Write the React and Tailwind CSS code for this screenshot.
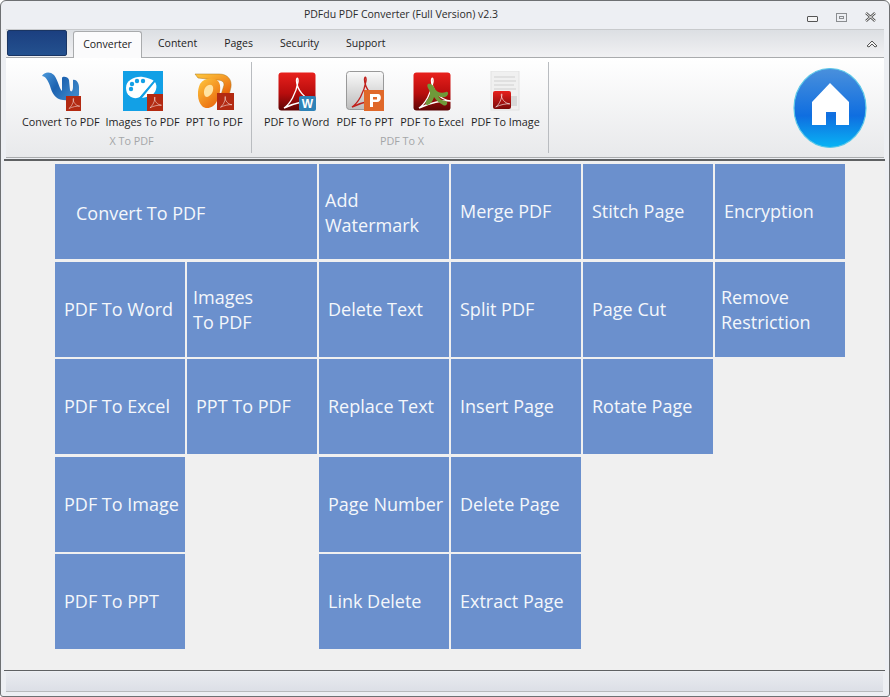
import React from 'react';

const fontStack = 'font-["Open_Sans","Liberation_Sans",sans-serif]';

const tiles = [
  { label: 'Convert To PDF', span: 'col-span-2', pad: 'pl-[21px] pt-[4px]' },
  { label: ['Add', 'Watermark'], pad: 'pl-[6px] pt-[2px]' },
  { label: 'Merge PDF' },
  { label: 'Stitch Page' },
  { label: 'Encryption' },
  { label: 'PDF To Word' },
  { label: ['Images', 'To PDF'], pad: 'pl-[6px] pt-[2px]' },
  { label: 'Delete Text' },
  { label: 'Split PDF' },
  { label: 'Page Cut' },
  { label: ['Remove', 'Restriction'], pad: 'pl-[6px] pt-[2px]' },
  { label: 'PDF To Excel' },
  { label: 'PPT To PDF' },
  { label: 'Replace Text' },
  { label: 'Insert Page' },
  { label: 'Rotate Page' },
  { blank: true },
  { label: 'PDF To Image' },
  { blank: true },
  { label: 'Page Number' },
  { label: 'Delete Page' },
  { blank: true },
  { blank: true },
  { label: 'PDF To PPT' },
  { blank: true },
  { label: 'Link Delete' },
  { label: 'Extract Page' },
];

const AcrobatMark = ({ color = '#fff', x = 0, y = 0, s = 1 }) => (
  <g transform={`translate(${x} ${y}) scale(${s})`}>
    <path
      d="M4 34 C10 30 16 20 18 8 C18.500 3 16.500 3 16.500 7 C17 15 24 26 36 27 C28 26 14 29 4 34 Z"
      fill="none"
      stroke={color}
      strokeWidth="1.400"
    />
  </g>
);

const RedSquare = ({ id }) => (
  <>
    <defs>
      <linearGradient id={id} x1="0" y1="0" x2="0" y2="1">
        <stop offset="0" stopColor="#e8201c" />
        <stop offset="0.55" stopColor="#b80d0d" />
        <stop offset="1" stopColor="#5c0505" />
      </linearGradient>
    </defs>
    <rect x="0.500" y="0.500" width="37" height="38" rx="3" fill={`url(#${id})`} />
  </>
);

const IconWps = () => (
  <svg width="40" height="40" viewBox="0 0 40 40">
    <defs>
      <linearGradient id="wpsg" x1="0" y1="0" x2="1" y2="0.600">
        <stop offset="0" stopColor="#4d9bdc" />
        <stop offset="0.500" stopColor="#1c62b0" />
        <stop offset="1" stopColor="#3c86c8" />
      </linearGradient>
    </defs>
    <path
      d="M1 5 C3 1 9 0 13 4 C17 9 18 17 21 20 L21 7 C21 5 27 5 28 9 L29 19 C30 22 32 20 32 16 L32 9 C35 8 38 12 38 16 L38 24 C36 30 28 30 22 29 C14 28 11 22 9 15 C7 9 4 5 1 5 Z"
      fill="url(#wpsg)"
    />
    <rect x="25" y="25" width="15" height="15" fill="#b32a12" />
    <AcrobatMark x={26.500} y={26} s={0.340} />
  </svg>
);

const IconImages = () => (
  <svg width="40" height="40" viewBox="0 0 40 40">
    <rect width="40" height="40" fill="#12a0e6" />
    <path d="M3 17 C3 9 12 5 20 6 C25 7 29 8 31 10 L17 26 C12 29 3 26 3 17 Z" fill="#fff" />
    <path d="M32 11 C35 15 33 22 28 25 L19 27 Z" fill="#fff" />
    <path d="M33 8 L17 27" stroke="#12a0e6" strokeWidth="1.500" />
    <circle cx="8" cy="18" r="2.200" fill="#12a0e6" />
    <circle cx="9" cy="13" r="2.200" fill="#12a0e6" />
    <circle cx="14" cy="10" r="2.200" fill="#12a0e6" />
    <circle cx="20" cy="10" r="2.200" fill="#12a0e6" />
    <rect x="24" y="23" width="16" height="17" fill="#b32a12" />
    <AcrobatMark x={25.500} y={24.500} s={0.360} />
  </svg>
);

const IconPpt = () => (
  <svg width="40" height="40" viewBox="0 0 40 40">
    <defs>
      <linearGradient id="pptg" x1="0" y1="0" x2="0.700" y2="1">
        <stop offset="0" stopColor="#ffc93f" />
        <stop offset="1" stopColor="#ea6a0e" />
      </linearGradient>
    </defs>
    <path d="M1 3 L25 3 C34 3 38 9 37 16 L35 24 L27 24 L30 14 C30 10 27 9 22 9 L4 7 Z" fill="url(#pptg)" stroke="#a8761e" strokeWidth="0.500" />
    <path d="M6 13 C10 7 19 6 24 10 C28 14 26 24 23 30 C20 37 12 39 8 35 C3 30 3 19 6 13 Z" fill="url(#pptg)" />
    <path d="M11 17 C14 13 18 13 19 16 C20 20 17 25 13 26 C10 26 9 21 11 17 Z" fill="#ffe3a3" />
    <rect x="23" y="22" width="17" height="17" fill="#b32a12" />
    <AcrobatMark x={25} y={24} s={0.360} />
  </svg>
);

const IconToWord = () => (
  <svg width="38" height="39" viewBox="0 0 38 39">
    <RedSquare id="rw" />
    <AcrobatMark x={2} y={2} />
    <rect x="21" y="24" width="17" height="15" rx="2" fill="#2e83b8" />
    <text x="29.500" y="36" textAnchor="middle" fontSize="12" fontWeight="700" fill="#fff" fontFamily="Liberation Sans">W</text>
  </svg>
);

const IconToPpt = () => (
  <svg width="38" height="40" viewBox="0 0 38 40">
    <defs>
      <linearGradient id="gp" x1="0" y1="0" x2="0" y2="1">
        <stop offset="0" stopColor="#fafafa" />
        <stop offset="1" stopColor="#bdbdbd" />
      </linearGradient>
    </defs>
    <rect x="0.500" y="0.500" width="37" height="38" rx="3" fill="url(#gp)" stroke="#999" />
    <AcrobatMark color="#c0201c" x={2} y={2} />
    <rect x="18" y="19" width="21" height="21" fill="#e0682a" />
    <path d="M24 23 L32 23 C36 23 36 31 31 31 L27 31 L27 36 L24 36 Z" fill="#fff" />
    <rect x="27" y="26" width="4" height="2.500" fill="#e0682a" />
  </svg>
);

const IconToExcel = () => (
  <svg width="38" height="39" viewBox="0 0 38 39">
    <RedSquare id="re" />
    <AcrobatMark x={2} y={2} />
    <path d="M15 12 C18 11 21 14 22 17 C24 20 28 22 33 20 C36 19 36 24 32 25 C28 26 26 24 25 24 C27 28 31 29 33 29 C36 31 33 35 30 33 C26 31 23 28 21 25 C20 29 17 33 14 33 C11 32 13 29 15 27 C17 25 17 22 17 20 C16 17 13 14 15 12 Z" fill="#6f9a3a" />
  </svg>
);

const IconToImage = () => (
  <svg width="30" height="40" viewBox="0 0 30 40">
    <rect x="1" y="0" width="28" height="39" fill="#f0f0f0" stroke="#e2e2e2" />
    <g stroke="#cfcfcf" strokeWidth="1.200">
      <line x1="4" y1="6" x2="25" y2="6" />
      <line x1="4" y1="10" x2="26" y2="10" />
      <line x1="4" y1="14" x2="24" y2="14" />
      <line x1="4" y1="18" x2="26" y2="18" />
    </g>
    <rect x="21" y="25" width="6" height="10" fill="#d8d8d8" />
    <defs>
      <linearGradient id="ri" x1="0" y1="0" x2="0" y2="1">
        <stop offset="0" stopColor="#e8201c" />
        <stop offset="1" stopColor="#7a0808" />
      </linearGradient>
    </defs>
    <rect x="3" y="20" width="18" height="18" rx="2" fill="url(#ri)" />
    <AcrobatMark x={4} y={21} s={0.440} />
  </svg>
);

const HomeButton = () => (
  <svg width="74" height="82" viewBox="0 0 74 82">
    <defs>
      <linearGradient id="hb" x1="0" y1="0" x2="0" y2="1">
        <stop offset="0" stopColor="#4a90dc" />
        <stop offset="0.600" stopColor="#0f6ee0" />
        <stop offset="1" stopColor="#08b4f5" />
      </linearGradient>
    </defs>
    <ellipse cx="37" cy="41" rx="36" ry="39.500" fill="url(#hb)" stroke="#5cc8e8" strokeWidth="1.200" />
    <path d="M37 16 L56 35 L56 58 L43 58 L43 45 L33 45 L33 58 L19 58 L19 35 Z" fill="#fff" />
  </svg>
);

const RibbonItem = ({ icon, label }) => (
  <div className="flex flex-col items-center">
    <div className="h-[40px] flex items-center justify-center">{icon}</div>
    <span className="mt-[4px] text-[10.800px] leading-[14px] text-[#1f1f1f] whitespace-nowrap">{label}</span>
  </div>
);

const RibbonGroup = ({ title, width, rowClass, titleClass, children }) => (
  <div className={`${width} h-[91px] border-r border-[#b9bcc0] flex flex-col shrink-0`}>
    <div className={`flex mt-[9px] ${rowClass}`}>{children}</div>
    <span className={`mt-[5px] text-center text-[10.800px] leading-[14px] text-[#a4a6a8] ${titleClass}`}>{title}</span>
  </div>
);

const Tile = ({ label, pad = 'pl-[9px]', span = '' }) => (
  <div className={`${span} h-[95px] bg-[#6b90cd] ${pad} flex flex-col justify-center text-[18px] leading-[25px] text-[#f4f7fb]`}>
    {Array.isArray(label) ? label.map((l) => <span key={l}>{l}</span>) : <span>{label}</span>}
  </div>
);

export default function App() {
  return (
    <div className={`${fontStack} w-[890px] h-[697px] bg-[#edeff3] border border-[#6e7072] rounded-t-[6px] rounded-b-[3px] flex flex-col overflow-hidden`}>
      {/* title bar */}
      <div className="h-[28px] shrink-0 flex items-center relative">
        <span className="w-full text-center text-[10.500px] text-[#2b2b2b] pr-[88px]">PDFdu PDF Converter (Full Version) v2.3</span>
        <div className="absolute right-[13px] top-[11px] flex items-start gap-[18px]">
          <div className="w-[11px] h-[6px] mt-[4px] border border-[#555] rounded-[1px] bg-[#f4f4f4]" />
          <div className="w-[11px] h-[9px] mt-[1px] border border-[#8a8d90] flex items-center justify-center">
            <div className="w-[5px] h-[3px] border border-[#8a8d90]" />
          </div>
          <svg width="11" height="10" viewBox="0 0 11 10">
            <path d="M1 1 L10 9 M10 1 L1 9" stroke="#555" strokeWidth="2.400" />
            <path d="M1 1 L10 9 M10 1 L1 9" stroke="#f4f4f4" strokeWidth="1" />
          </svg>
        </div>
      </div>

      {/* ribbon */}
      <div className="mx-[5px] w-[878px] shrink-0 border-t border-[#c8cacc]">
        <div className="h-[28px] flex items-end pl-[1px] bg-gradient-to-b from-[#dcdfe3] to-[#f1f1f3] border-b border-[#a9abad] relative">
          <div className="w-[60px] h-[26px] mb-px rounded-[2px] border border-[#1a3563] bg-gradient-to-b from-[#1b3f80] to-[#24518f]" />
          <div className="ml-[6px] w-[69px] h-[27px] -mb-px bg-[#fbfbfc] border border-b-0 border-[#a9abad] rounded-t-[3px] flex items-center justify-center text-[10.500px] text-[#222]">Converter</div>
          <div className="flex h-[26px] items-center text-[10.500px] text-[#222] ml-[16px] gap-[27px]">
            <span>Content</span>
            <span>Pages</span>
            <span>Security</span>
            <span>Support</span>
          </div>
          <svg className="absolute right-[6px] top-[9px]" width="12" height="9" viewBox="0 0 12 9">
            <path d="M1 7 L6 2 L11 7 L9 8 L6 5 L3 8 Z" fill="#f4f4f4" stroke="#555" strokeWidth="1" />
          </svg>
        </div>
        <div className="h-[100px] pt-[4px] flex justify-between bg-gradient-to-b from-[#ffffff] to-[#e8e9eb] border-b border-[#a9abad]">
          <div className="flex">
            <RibbonGroup title="X To PDF" width="w-[246px]" rowClass="pl-[16px] gap-[6px]" titleClass="pl-[6px]">
              <RibbonItem label="Convert To PDF" icon={<IconWps />} />
              <RibbonItem label="Images To PDF" icon={<IconImages />} />
              <RibbonItem label="PPT To PDF" icon={<IconPpt />} />
            </RibbonGroup>
            <RibbonGroup title="PDF To X" width="w-[297px]" rowClass="pl-[12px] gap-[7px]" titleClass="pl-[4px]">
              <RibbonItem label="PDF To Word" icon={<IconToWord />} />
              <RibbonItem label="PDF To PPT" icon={<IconToPpt />} />
              <RibbonItem label="PDF To Excel" icon={<IconToExcel />} />
              <RibbonItem label="PDF To Image" icon={<IconToImage />} />
            </RibbonGroup>
          </div>
          <div className="mr-[17px] mt-[5px]">
            <HomeButton />
          </div>
        </div>
      </div>

      {/* tile area */}
      <div className="mx-[3px] w-[881px] h-[511px] mt-[1px] shrink-0 bg-[#f0f0f0] border-t-2 border-[#5f6163] pt-[3px] pl-[51px]">
        <div className="grid grid-cols-[repeat(6,130px)] gap-x-[2px] gap-y-[2.500px]">
          {tiles.map((t, i) =>
            t.blank ? <div key={i} /> : <Tile key={i} label={t.label} pad={t.pad} span={t.span} />
          )}
        </div>
      </div>

      {/* status bar */}
      <div className="mx-[3px] w-[881px] flex-1 border-t border-[#5f6163] px-[2px] pt-[1px] pb-[4px]">
        <div className="h-full bg-gradient-to-b from-[#e9ebf0] to-[#dcdfe6] border-b border-[#b8babc]" />
      </div>
    </div>
  );
}
